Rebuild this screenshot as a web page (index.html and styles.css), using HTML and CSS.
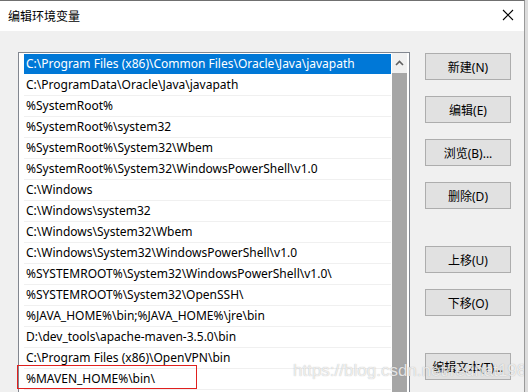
FILE: index.html
```html
<!DOCTYPE html>
<html lang="zh-CN">
<head>
    <meta charset="utf-8" />
    <title>编辑环境变量</title>
    <link rel="stylesheet" href="styles.css">
</head>
<body>
    <div class="window">
        <div class="titlebar">
            <span class="title">编辑环境变量</span>
            <svg class="close" width="12" height="12" viewBox="0 0 12 12">
                <path d="M1 1 L11 11 M11 1 L1 11" stroke="#000" stroke-width="1.1" fill="none"/>
            </svg>
        </div>

        <div class="content">
            <div class="listbox">
                <div class="rows">
                    <div class="row selected">C:\Program Files (x86)\Common Files\Oracle\Java\javapath</div>
                    <div class="row">C:\ProgramData\Oracle\Java\javapath</div>
                    <div class="row">%SystemRoot%</div>
                    <div class="row">%SystemRoot%\system32</div>
                    <div class="row">%SystemRoot%\System32\Wbem</div>
                    <div class="row">%SystemRoot%\System32\WindowsPowerShell\v1.0</div>
                    <div class="row">C:\Windows</div>
                    <div class="row">C:\Windows\system32</div>
                    <div class="row">C:\Windows\System32\Wbem</div>
                    <div class="row">C:\Windows\System32\WindowsPowerShell\v1.0</div>
                    <div class="row">%SYSTEMROOT%\System32\WindowsPowerShell\v1.0\</div>
                    <div class="row">%SYSTEMROOT%\System32\OpenSSH\</div>
                    <div class="row">%JAVA_HOME%\bin;%JAVA_HOME%\jre\bin</div>
                    <div class="row">D:\dev_tools\apache-maven-3.5.0\bin</div>
                    <div class="row">C:\Program Files (x86)\OpenVPN\bin</div>
                    <div class="row">%MAVEN_HOME%\bin\</div>
                </div>
                <div class="scrollbar">
                    <div class="arrow">
                        <svg width="9" height="6" viewBox="0 0 9 6">
                            <path d="M1 5 L4.5 1.5 L8 5" stroke="#606060" stroke-width="1.6" fill="none"/>
                        </svg>
                    </div>
                    <div class="thumb"></div>
                </div>
                <div class="highlight"></div>
            </div>

            <div class="buttons">
                <button class="button">新建(N)</button>
                <button class="button gap">编辑(E)</button>
                <button class="button gap">浏览(B)...</button>
                <button class="button gap">删除(D)</button>
                <button class="button gap-wide">上移(U)</button>
                <button class="button gap">下移(O)</button>
                <button class="button gap-wide">编辑文本(T)...</button>
            </div>
        </div>

        <div class="watermark">https://blog.csdn.net/redhat1986</div>
    </div>
</body>
</html>
```

FILE: styles.css
```css
body {
    margin: 0;
    background: #dcdcdc;
    font-family: "Noto Sans", "Noto Sans CJK SC", sans-serif;
    font-size: 12px;
    color: #000;
}

.window {
    position: relative;
    width: 524px;
    height: 392px;
    background: #f0f0f0;
    border-top: 1px solid #707070;
    border-right: 1px solid #9a9a9a;
    overflow: hidden;
}

.titlebar {
    height: 30px;
    background: #fff;
    display: flex;
    align-items: center;
    justify-content: space-between;
    padding: 0 10px 0 8px;
}

.title {
    font-family: "Noto Sans CJK SC", sans-serif;
    font-size: 12px;
    margin-top: -1px;
}

.close {
    margin-top: -3px;
}

.content {
    display: flex;
    padding: 21px 0 0 18px;
}

.listbox {
    position: relative;
    display: flex;
    width: 392px;
    height: 360px;
    background: #fff;
    border: 1px solid #828790;
    border-bottom: none;
    padding: 1px 0 0 5px;
    box-sizing: border-box;
}

.rows {
    width: 367px;
}

.row {
    height: 20px;
    line-height: 20px;
    padding-left: 2px;
    border-bottom: 1px solid #f0f0f0;
    white-space: nowrap;
    overflow: hidden;
}

.row.selected {
    background: #0078d7;
    color: #fff;
    border-bottom-color: #fff;
}

.scrollbar {
    margin-left: 1px;
    width: 15px;
    display: flex;
    flex-direction: column;
    margin-top: -1px;
}

.arrow {
    height: 20px;
    background: #f0f0f0;
    display: flex;
    align-items: center;
    justify-content: center;
}

.thumb {
    flex: 1;
    background: #a6a6a6;
}

.highlight {
    position: absolute;
    left: -2px;
    top: 312px;
    width: 178px;
    height: 22px;
    border: 1px solid #e0201e;
}

.buttons {
    display: flex;
    flex-direction: column;
    margin-left: 15px;
    padding-top: 1px;
}

.button {
    width: 86px;
    height: 27px;
    border: 1px solid #adadad;
    background: #e1e1e1;
    font-family: "Noto Sans", "Noto Sans CJK SC", sans-serif;
    font-size: 12px;
    color: #000;
    padding: 0;
}

.gap {
    margin-top: 16px;
}

.gap-wide {
    margin-top: 37px;
}

.watermark {
    position: absolute;
    left: 293px;
    top: 360px;
    font-family: "Liberation Sans", sans-serif;
    font-size: 17px;
    color: rgba(255, 255, 255, 0.75);
    text-shadow: 0 0 1px rgba(120, 120, 120, 0.6);
}
```
